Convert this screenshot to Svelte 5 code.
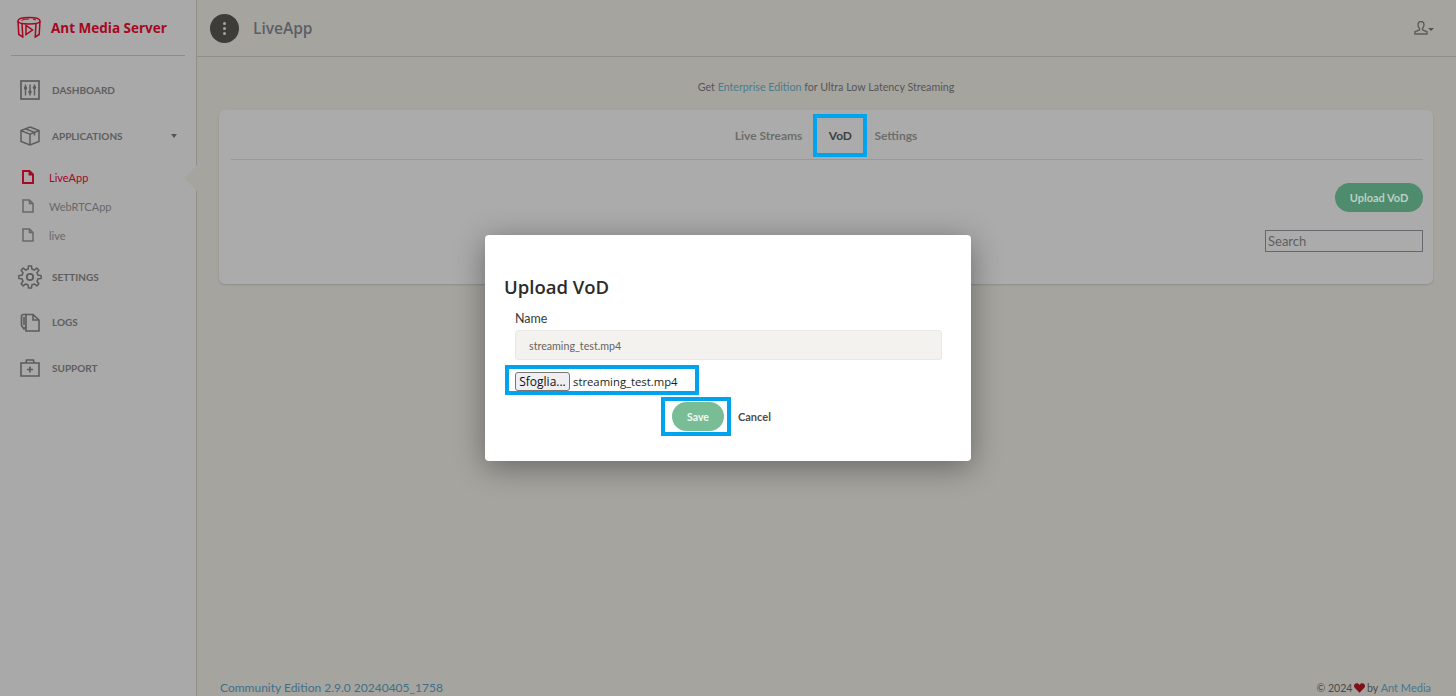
<script>
  const apps = [
    { name: 'LiveApp', active: true },
    { name: 'WebRTCApp', active: false },
    { name: 'live', active: false }
  ];

  function gearPath(cx, cy, outer, inner, teeth) {
    const step = (Math.PI * 2) / teeth;
    const pts = [];
    for (let i = 0; i < teeth; i++) {
      const a = i * step;
      const w = step * 0.17;
      const u = step * 0.29;
      pts.push([inner, a - u], [outer, a - w], [outer, a + w], [inner, a + u]);
    }
    return (
      pts
        .map(([r, a], i) => `${i ? 'L' : 'M'}${(cx + r * Math.sin(a)).toFixed(2)} ${(cy - r * Math.cos(a)).toFixed(2)}`)
        .join('') + 'Z'
    );
  }
  const gear = gearPath(12, 12, 11.2, 8.2, 8);
</script>

<div class="page">
  <aside class="sidebar">
    <div class="brand">
      <svg class="logo" viewBox="0 0 26 22" width="26" height="22" fill="none" stroke="#a5081f" stroke-width="1.500">
        <path d="M2 5Q2 1.500 13 1.500T24 5Q24 8 13 8T2 5z" />
        <path d="M2 5l.8 13.500 4 2.500L6 7.500M24 5l-.8 13.500-4 2.500.8-13.500" />
        <path d="M5.500 4.500Q7 3 13 3M17 3.200l3 .8" stroke-width="1" />
        <path d="M10 9.500v9l6.500-4.500z" />
      </svg>
      <span class="brand-name">Ant Media Server</span>
    </div>
    <nav class="nav">
      <a class="item">
        <svg viewBox="0 0 20 20" width="20" height="20" fill="none" stroke="#5c5c5c" stroke-width="1.700">
          <rect x="1" y="1" width="18" height="18" />
          <path d="M5.500 4.500v11M10 4.500v11M14.500 4.500v11" stroke-width="1.400" />
          <circle cx="5.500" cy="8" r="1.700" fill="#5c5c5c" stroke="none" /><circle cx="10" cy="12" r="1.700" fill="#5c5c5c" stroke="none" /><circle cx="14.500" cy="7.500" r="1.700" fill="#5c5c5c" stroke="none" />
        </svg>
        <span>DASHBOARD</span>
      </a>
      <a class="item">
        <svg viewBox="0 0 20 20" width="20" height="20" fill="none" stroke="#5c5c5c" stroke-width="1.500">
          <path d="M10 1l9 3.600v10.800L10 19l-9-3.600V4.600zM1 4.600l9 3.600 9-3.600M10 8.200V19M5.500 2.800l9 3.600v3" />
        </svg>
        <span>APPLICATIONS</span>
        <i class="caret"></i>
      </a>
      <ul class="sub">
        {#each apps as app}
          <li class:active={app.active}>
            <svg viewBox="0 0 12 14" width="12" height="14" fill="none" stroke="currentColor" stroke-width={app.active ? 1.900 : 1.500}>
              <path d="M1 1h6.500L11 4.500V13H1zM7.500 1v3.500H11" />
            </svg>
            <span>{app.name}</span>
          </li>
        {/each}
      </ul>
      <a class="item set">
        <svg viewBox="0 0 24 24" width="24" height="24" fill="none" stroke="#5c5c5c" stroke-width="1.500" stroke-linejoin="round">
          <path d={gear} />
          <circle cx="12" cy="12" r="3.200" stroke-width="1.800" />
        </svg>
        <span>SETTINGS</span>
      </a>
      <a class="item">
        <svg viewBox="0 0 20 20" width="20" height="20" fill="none" stroke="#5c5c5c" stroke-width="1.600">
          <path d="M6 2.500h7l6 5.500v11H6zM13 2.500V8h6" />
          <path d="M6 2.500H3.500Q1.500 2.500 1.500 4.500v9l2.500 3.500 2-2.500M4 5v8" />
        </svg>
        <span>LOGS</span>
      </a>
      <a class="item">
        <svg viewBox="0 0 20 20" width="20" height="20" fill="none" stroke="#5c5c5c" stroke-width="1.600">
          <path d="M1 5h18v13H1zM6 5l.5-3h7l.5 3M7 11.500h6M10 8.500v6" />
        </svg>
        <span>SUPPORT</span>
      </a>
    </nav>
    <i class="pointer"></i>
  </aside>

  <main class="main">
    <header class="topbar">
      <div class="title">
        <button class="dots" aria-label="menu"><i></i><i></i><i></i></button>
        <span>LiveApp</span>
      </div>
      <div class="user">
        <svg viewBox="0 0 14 14" width="14" height="14" fill="none" stroke="#5c5c5c" stroke-width="1.400">
          <path d="M4 3.500a3 3 0 0 1 6 0c0 2-1 3.500-1.500 4v1.300l4.500 2V13H1v-2.200l4.500-2V7.500C5 7 4 5.500 4 3.500z" />
        </svg>
        <i class="caret small"></i>
      </div>
    </header>

    <div class="content">
      <p class="promo">Get <a>Enterprise Edition</a> for Ultra Low Latency Streaming</p>
      <section class="card">
        <div class="tabs">
          <span class="tab">Live Streams</span>
          <span class="tab current">VoD</span>
          <span class="tab">Settings</span>
        </div>
        <div class="actions"><button class="upload">Upload VoD</button></div>
        <div class="search-row"><input class="search" placeholder="Search" /></div>
      </section>
    </div>

    <footer class="footer">
      <a class="version">Community Edition 2.9.0 20240405_1758</a>
      <span class="copy">© 2024 <svg viewBox="0 0 16 14" width="11" height="10"><path d="M8 14L1 6.800C-1.500 3.500 1 0 4 0c1.800 0 3.200 1 4 2.500C8.800 1 10.200 0 12 0c3 0 5.500 3.500 3 6.800z" fill="#7e1018" /></svg> by <a>Ant Media</a></span>
    </footer>
  </main>

  <div class="modal">
    <h2>Upload VoD</h2>
    <div class="form">
      <label for="vod-name">Name</label>
      <input id="vod-name" class="name" value="streaming_test.mp4" readonly />
      <div class="file"><button>Sfoglia...</button><span>streaming_test.mp4</span></div>
      <div class="buttons">
        <span class="save-box"><button class="save">Save</button></span>
        <button class="cancel">Cancel</button>
      </div>
    </div>
  </div>
</div>

<style>
  :global(body) { margin: 0; background: #a6a49f; }
  .page { position: relative; display: flex; width: 1456px; height: 696px; overflow: hidden; font-family: Lato, "Liberation Sans", sans-serif; color: #5c5c5c; }

  .sidebar { position: relative; width: 196px; flex: none; background: #a9a9a9; border-right: 1px solid #8f8e8b; }
  .brand { display: flex; align-items: center; gap: 9px; margin: 0 11px; height: 55px; border-bottom: 1px solid #8c8c8c; padding-left: 5px; }
  .logo { flex: none; margin-top: -1px; }
  .brand-name { font-family: "Open Sans", sans-serif; font-weight: 700; font-size: 13.500px; color: #a5081f; }
  .nav { padding-top: 11.500px; display: flex; flex-direction: column; }
  .item { display: flex; align-items: center; height: 45.500px; padding-left: 20px; gap: 12px; font-size: 10px; font-weight: 700; color: #5e5e5e; }
  .item.set { padding-left: 18px; gap: 10px; }
  .item svg { flex: none; }
  .caret { width: 0; height: 0; border: 3.500px solid transparent; border-top: 4px solid #555; border-bottom: 0; margin-left: 36px; }
  .caret.small { margin-left: 0; border-width: 3px; border-top-width: 3px; border-bottom: 0; margin-top: 2px; }
  .sub { list-style: none; margin: 0; padding: 4px 0 4.500px; }
  .sub li { display: flex; align-items: center; gap: 15px; height: 29px; padding-left: 22px; font-size: 11px; color: #686868; }
  .sub li.active { color: #a5081f; }
  .pointer { position: absolute; left: 184px; top: 165px; width: 13px; height: 26px; background: #a6a49f; clip-path: polygon(100% 0, 0 50%, 100% 100%); }

  .main { flex: 1; display: flex; flex-direction: column; min-width: 0; }
  .topbar { height: 56px; flex: none; display: flex; align-items: center; justify-content: space-between; padding: 0 22px 0 13px; border-bottom: 1px solid #8f8e8b; }
  .title { display: flex; align-items: center; gap: 14px; font-family: "Open Sans", sans-serif; font-size: 15.500px; font-weight: 600; color: #5a5f66; }
  .dots { width: 29px; height: 29px; border-radius: 50%; border: 0; background: #3e3c39; display: flex; flex-direction: column; align-items: center; justify-content: center; gap: 2px; padding: 0; }
  .dots i { width: 3px; height: 3px; background: #a6a49f; border-radius: 50%; }
  .user { display: flex; align-items: center; }

  .content { flex: 1; padding: 0 23px 0 22px; }
  .promo { margin: 23px 0 0; height: 30px; line-height: 14px; text-align: center; font-size: 10.700px; color: #565656; }
  .promo a { color: #4b7c89; }
  .card { height: 174px; background: #ababab; border-radius: 6px; box-shadow: 0 1px 2px rgba(0,0,0,.15); padding: 0 10px 0 12px; box-sizing: border-box; }
  .tabs { box-sizing: border-box; display: flex; justify-content: center; align-items: center; height: 50px; padding: 2px 2px 0 0; border-bottom: 1px solid #999; }
  .tab { font-family: Lato, sans-serif; font-weight: 700; font-size: 12px; color: #6d6d6a; }
  .tab.current { display: flex; align-items: center; justify-content: center; box-sizing: border-box; width: 54px; height: 43px; border: 4px solid #00a3ee; margin: 0 7px 0 11px; color: #3f3f3f; }
  .actions { display: flex; justify-content: flex-end; margin-top: 23px; }
  .upload { width: 88px; height: 29px; border: 0; border-radius: 15px; background: #4f8c6d; color: #bcd0c4; font: 700 11px Lato, sans-serif; padding: 0; }
  .search-row { display: flex; justify-content: flex-end; margin-top: 18px; }
  .search { box-sizing: border-box; width: 158px; height: 22px; background: transparent; border: 1px solid #66666c; padding: 0 2px; font: 13px Lato, sans-serif; border-radius: 0; outline: none; }
  .search::placeholder { color: #5f5f5f; opacity: 1; }

  .footer { height: 16px; flex: none; display: flex; justify-content: space-between; align-items: flex-start; padding: 0 25px 0 23px; font-size: 12px; line-height: 16px; }
  .version { color: #3f6f8a; }
  .copy { font-size: 10.600px; color: #4a4a4a; display: flex; align-items: center; white-space: pre; }
  .copy svg { margin: 0 -1px; }
  .copy a { color: #43788c; font-size: 11px; }

  .modal { position: absolute; left: 485px; top: 235px; width: 486px; height: 226px; box-sizing: border-box; background: #fff; border-radius: 4px; box-shadow: 0 6px 30px rgba(0,0,0,.38); padding: 40px 30px 0 19px; color: #333; }
  h2 { margin: 0; font-family: "Open Sans", sans-serif; font-weight: 600; font-size: 18.500px; line-height: 24px; color: #2b2b2b; }
  .form { padding-left: 11px; display: flex; flex-direction: column; }
  label { font-size: 12.500px; line-height: 16px; margin-top: 12px; color: #3a3a3a; }
  .name { box-sizing: border-box; margin-top: 3px; width: 427px; height: 30px; background: #f3f2ee; border: 1px solid #e9e8e4; border-radius: 3px; padding: 0 13px; font: 10.700px Lato, sans-serif; color: #66645f; outline: none; }
  .file { box-sizing: border-box; margin: 5px 0 0 -10px; width: 194px; height: 30px; border: 4px solid #00a3ee; display: flex; align-items: center; gap: 3px; padding: 2px 0 0 6px; font: 11.300px "Open Sans", sans-serif; color: #1c1c1c; }
  .file button { box-sizing: border-box; width: 55px; height: 19px; padding: 0; background: #efeff1; border: 1px solid #767676; border-radius: 3px; font: 12px "Open Sans", sans-serif; color: #111; }
  .buttons { display: flex; align-items: center; margin: 2px 0 0 146px; }
  .save-box { box-sizing: border-box; width: 70px; height: 39px; border: 4px solid #00a3ee; display: flex; align-items: center; justify-content: center; padding-left: 4px; }
  .save { flex: none; width: 52px; height: 29px; border: 0; border-radius: 15px; background: #79bd97; color: #f2f8f4; font: 700 10.500px Lato, sans-serif; padding: 0; }
  .cancel { background: none; border: 0; padding: 0; margin-left: 7px; font: 700 11px Lato, sans-serif; color: #4d4d4d; }
</style>
